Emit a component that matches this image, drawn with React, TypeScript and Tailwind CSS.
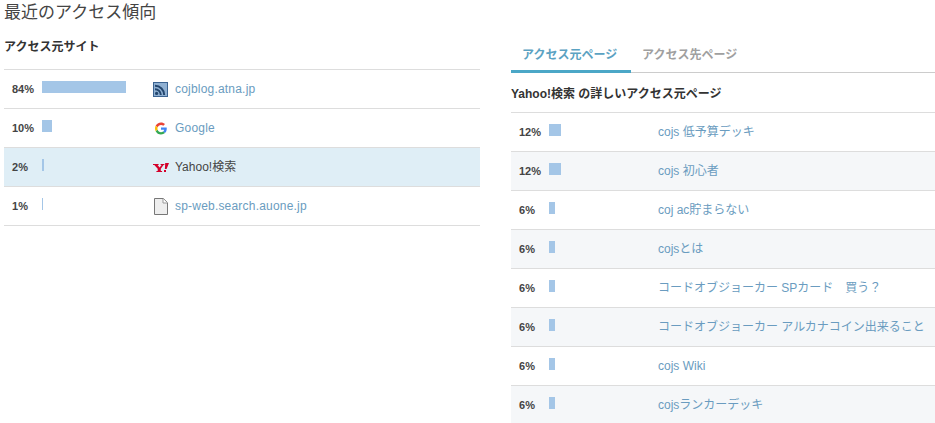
const sources = [
  { pct: 84, name: "cojblog.atna.jp", icon: "rss" },
  { pct: 10, name: "Google", icon: "google" },
  { pct: 2, name: "Yahoo!検索", icon: "yahoo", active: true },
  { pct: 1, name: "sp-web.search.auone.jp", icon: "file" },
];

const pages = [
  { pct: 12, name: "cojs 低予算デッキ" },
  { pct: 12, name: "cojs 初心者" },
  { pct: 6, name: "coj ac貯まらない" },
  { pct: 6, name: "cojsとは" },
  { pct: 6, name: "コードオブジョーカー SPカード　買う？" },
  { pct: 6, name: "コードオブジョーカー アルカナコイン出来ること" },
  { pct: 6, name: "cojs Wiki" },
  { pct: 6, name: "cojsランカーデッキ" },
];

function SiteIcon({ icon }: { icon: string }) {
  if (icon === "rss") {
    return (
      <svg width="15" height="15" viewBox="0 0 15 15">
        <rect width="15" height="15" fill="#3b6391" />
        <rect x="1" y="1" width="13" height="13" fill="#8fb0d2" />
        <circle cx="3.6" cy="11.4" r="1.6" fill="#23466e" />
        <path d="M2 7.2a5.8 5.8 0 0 1 5.8 5.8M2 3.800A9.200 9.200 0 0 1 11.200 13" fill="none" stroke="#23466e" strokeWidth="2" />
      </svg>
    );
  }
  if (icon === "google") {
    return (
      <svg width="12" height="13" viewBox="0 0 48 48">
        <path fill="#EA4335" d="M24 9.500c3.500 0 6.700 1.200 9.200 3.600l6.900-6.900C35.900 2.400 30.400 0 24 0 14.600 0 6.500 5.400 2.600 13.200l8 6.200C12.500 13.700 17.800 9.500 24 9.500z" />
        <path fill="#4285F4" d="M47 24.500c0-1.600-.1-3.100-.4-4.500H24v9h12.900c-.6 3-2.300 5.500-4.800 7.200l7.700 6C44.300 38 47 31.800 47 24.500z" />
        <path fill="#FBBC05" d="M10.600 28.600c-.5-1.400-.8-3-.8-4.600s.3-3.200.8-4.600l-8-6.200C.9 16.500 0 20.100 0 24s.9 7.500 2.600 10.800l8-6.200z" />
        <path fill="#34A853" d="M24 48c6.500 0 11.900-2.100 15.900-5.800l-7.700-6c-2.200 1.400-4.900 2.300-8.200 2.300-6.200 0-11.500-4.200-13.400-9.900l-8 6.200C6.500 42.600 14.600 48 24 48z" />
      </svg>
    );
  }
  if (icon === "yahoo") {
    return (
      <svg width="16" height="10" viewBox="0 0 16 10">
        <path fill="#d4002a" d="M0 1h5.600v1H4.600l2 2.600 2-2.600H7.600V1h3.800v1h-.9L7.800 5.700v2.300h1.300V9H3.400V8h1.300V5.800L1.300 2H0z" />
        <path fill="#d4002a" d="M12.200 0H16l-2.400 6h-1.700zM11 7h2v2h-2z" />
      </svg>
    );
  }
  return (
    <svg width="14" height="17" viewBox="0 0 14 17">
      <path d="M.5.5h8.800l4.200 4.200v11.800H.5z" fill="#eeeeee" stroke="#777" />
      <path d="M9 .8v4.200h4.200" fill="#fff" stroke="#999" />
    </svg>
  );
}

function Bar({ pct }: { pct: number }) {
  return <div className="h-3 bg-[#a4c6e7]" style={{ width: pct }} />;
}

export default function App() {
  return (
    <div className="w-[935px] h-[423px] overflow-hidden bg-white text-[12px] text-[#333] font-['Liberation_Sans','Noto_Sans_CJK_JP',sans-serif]">
      <h2 className="pl-1 h-[25px] text-[17px] leading-[26px] text-[#444]">最近のアクセス傾向</h2>
      <div className="flex">
        <div className="ml-1 w-[476px]">
          <div className="h-[45px] pt-[14px] font-bold leading-[17px] border-b border-[#ddd]">アクセス元サイト</div>
          {sources.map((s) => (
            <div key={s.name} className={`flex h-[39px] border-b border-[#ddd] ${s.active ? "bg-[#dfeef6]" : ""}`}>
              <div className="w-[38px] pl-2 pt-3 text-[11px] font-bold leading-[15px] text-[#444]">{s.pct}%</div>
              <div className="w-[108px] pt-[11px]"><Bar pct={s.pct} /></div>
              <div className="w-[21px] flex items-center justify-center pt-px"><SiteIcon icon={s.icon} /></div>
              <div className={`pl-1 pt-[11px] leading-[17px] ${s.active ? "text-[#444]" : "text-[#6a9cc0] tracking-[0.2px]"}`}>{s.name}</div>
            </div>
          ))}
        </div>
        <div className="ml-[31px] w-[424px] mt-[20px]">
          <div className="flex h-[28px] border-b border-[#ccc]">
            <div className="w-[120px] h-[28px] border-b-[3px] border-[#4ba7c7] pl-[11px] pt-[2px] font-bold text-[#5ba2c2] leading-[17px]">アクセス元ページ</div>
            <div className="pl-[11px] pt-[2px] font-bold text-[#a0a0a0] leading-[17px]">アクセス先ページ</div>
          </div>
          <div className="h-[40px] pt-[13px] font-bold leading-[17px] border-b border-[#ddd]">Yahoo!検索 の詳しいアクセス元ページ</div>
          {pages.map((p, i) => (
            <div key={p.name} className={`flex h-[39px] border-b border-[#ddd] ${i % 2 === 1 ? "bg-[#f5f7f9]" : ""}`}>
              <div className="w-[38px] pl-2 pt-3 text-[11px] font-bold leading-[15px] text-[#444]">{p.pct}%</div>
              <div className="w-[109px] pt-[11px]"><Bar pct={p.pct} /></div>
              <div className="pt-[11px] leading-[17px] text-[#6a9cc0] whitespace-nowrap">{p.name}</div>
            </div>
          ))}
        </div>
      </div>
    </div>
  );
}
